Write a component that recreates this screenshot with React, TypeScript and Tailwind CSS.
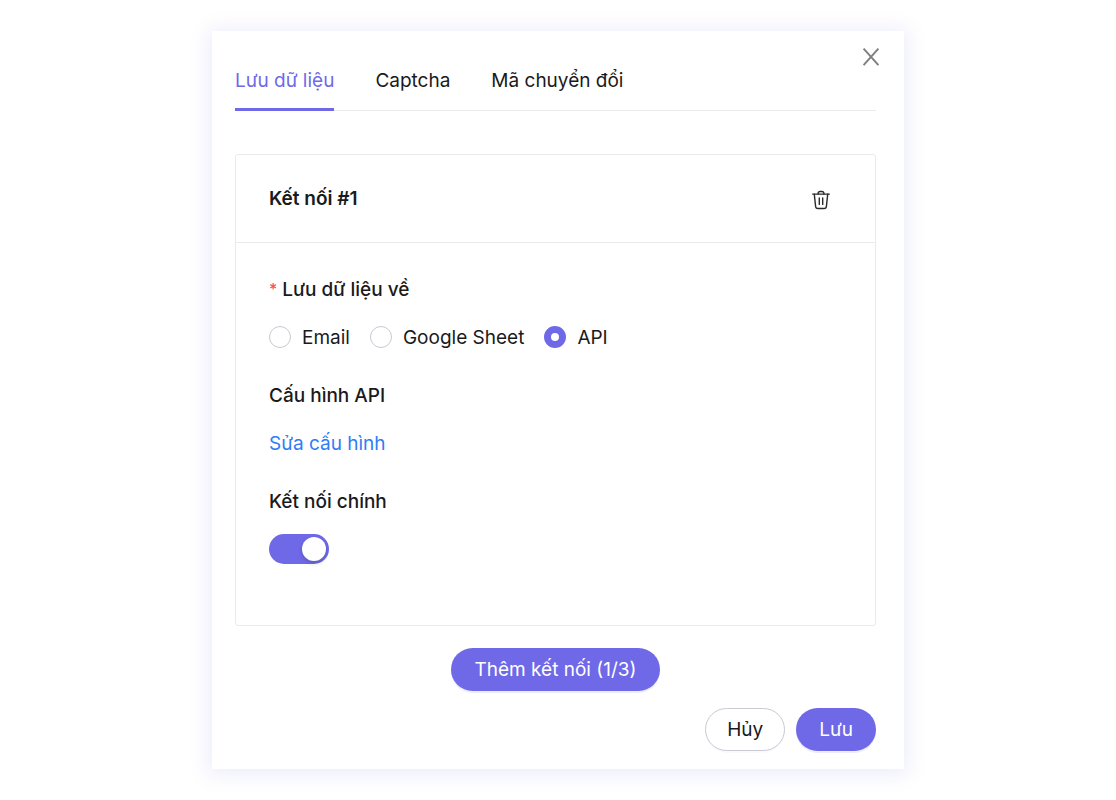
import { useState } from 'react';

const TABS = ['Lưu dữ liệu', 'Captcha', 'Mã chuyển đổi'];
const TARGETS = ['Email', 'Google Sheet', 'API'];

function CloseIcon() {
  return (
    <svg width="18" height="20" viewBox="0 0 18 20" fill="none" stroke="#808080" strokeWidth="2" aria-hidden="true">
      <path d="M1.6 1.6 16.4 18.2M16.4 1.6 1.6 18.2" />
    </svg>
  );
}

function TrashIcon() {
  return (
    <svg width="20" height="20" viewBox="0 0 20 20" fill="none" stroke="#2b2b2b" strokeWidth="1.4" strokeLinecap="round" strokeLinejoin="round" aria-hidden="true">
      <path d="M1.7 4.1h16.6" />
      <path d="M7.1 4V3.4A2 2 0 0 1 9.1 1.5h1.8a2 2 0 0 1 2 1.9V4" />
      <path d="M3.3 4.3 4.6 16.3A2.3 2.3 0 0 0 6.9 18.5h6.2a2.3 2.3 0 0 0 2.3-2.2L16.7 4.3" />
      <path d="M8.3 8v6.4M11.7 8v6.4" />
    </svg>
  );
}

export default function App() {
  const [tab, setTab] = useState(TABS[0]);
  const [target, setTarget] = useState('API');
  const [main, setMain] = useState(true);

  return (
    <div className="min-h-screen bg-white px-4 py-[31px] font-['Inter','Liberation_Sans',sans-serif] text-[19px] leading-6 text-[#1a1a1a]">
      <div role="dialog" aria-label="Lưu dữ liệu" className="relative mx-auto max-w-[692px] bg-white pt-[38px] pr-7 pb-[18px] pl-[23px] shadow-[0_2px_18px_4px_rgba(111,105,232,0.12)]">
        <button type="button" aria-label="Đóng" className="absolute top-4 right-6 cursor-pointer">
          <CloseIcon />
        </button>

        <div role="tablist" className="flex gap-[41px] border-b border-[#ebebeb]">
          {TABS.map((name) => (
            <button
              key={name}
              type="button"
              role="tab"
              aria-selected={tab === name}
              onClick={() => setTab(name)}
              className={
                tab === name
                  ? '-mb-px cursor-pointer border-b-3 border-[#6f69e8] pb-[15px] text-[#6f69e8]'
                  : '-mb-px cursor-pointer border-b-3 border-transparent pb-[15px]'
              }
            >
              {name}
            </button>
          ))}
        </div>

        <section className="mt-[43px] rounded-[3px] border border-[#ebebeb]">
          <header className="flex h-[88px] items-center justify-between border-b border-[#ebebeb] pr-11 pl-[33px]">
            <h2 className="font-semibold">Kết nối #1</h2>
            <button type="button" aria-label="Xóa kết nối" className="mt-0.5 cursor-pointer">
              <TrashIcon />
            </button>
          </header>

          <div className="px-[33px] pt-[35px] pb-[61px]">
            <fieldset>
              <legend className="flex gap-[5px] font-medium">
                <span className="text-base leading-[22px] text-[#ff4d4f]">*</span>
                Lưu dữ liệu về
              </legend>
              <div className="mt-6 flex flex-wrap gap-x-5 gap-y-3">
                {TARGETS.map((name) => (
                  <label key={name} className="flex cursor-pointer items-start gap-[11px]">
                    <input
                      type="radio"
                      name="target"
                      checked={target === name}
                      onChange={() => setTarget(name)}
                      className="size-[22px] appearance-none rounded-full border border-[#c9c9d4] bg-white checked:border-[7px] checked:border-[#6f69e8]"
                    />
                    {name}
                  </label>
                ))}
              </div>
            </fieldset>

            <h3 className="mt-[34px] font-medium">Cấu hình API</h3>
            <a href="#config" className="mt-6 inline-block text-[#2f7cf6]">Sửa cấu hình</a>

            <label htmlFor="main-connection" className="mt-[34px] block w-fit font-medium">Kết nối chính</label>
            <input
              id="main-connection"
              type="checkbox"
              role="switch"
              checked={main}
              onChange={(e) => setMain(e.target.checked)}
              className="mt-5 block h-[30px] w-[60px] cursor-pointer appearance-none rounded-full bg-[#bfbfbf] p-[3px] before:block before:size-6 before:rounded-full before:bg-white before:shadow-[0_2px_4px_rgba(0,35,11,0.2)] checked:bg-[#6f69e8] checked:before:ml-[30px]"
            />
          </div>
        </section>

        <div className="mt-[22px] flex justify-center">
          <button type="button" className="h-[43px] cursor-pointer rounded-full bg-[#6f69e8] px-6 text-white shadow-[0_2px_0_rgba(111,105,232,0.12)]">
            Thêm kết nối (1/3)
          </button>
        </div>

        <footer className="mt-[17px] flex justify-end gap-[11px]">
          <button type="button" className="h-[43px] cursor-pointer rounded-full border border-[#c9c9d4] bg-white px-[21px] shadow-[0_2px_0_rgba(0,0,0,0.02)]">
            Hủy
          </button>
          <button type="button" className="h-[43px] cursor-pointer rounded-full bg-[#6f69e8] px-[23px] text-white shadow-[0_2px_0_rgba(111,105,232,0.12)]">
            Lưu
          </button>
        </footer>
      </div>
    </div>
  );
}
